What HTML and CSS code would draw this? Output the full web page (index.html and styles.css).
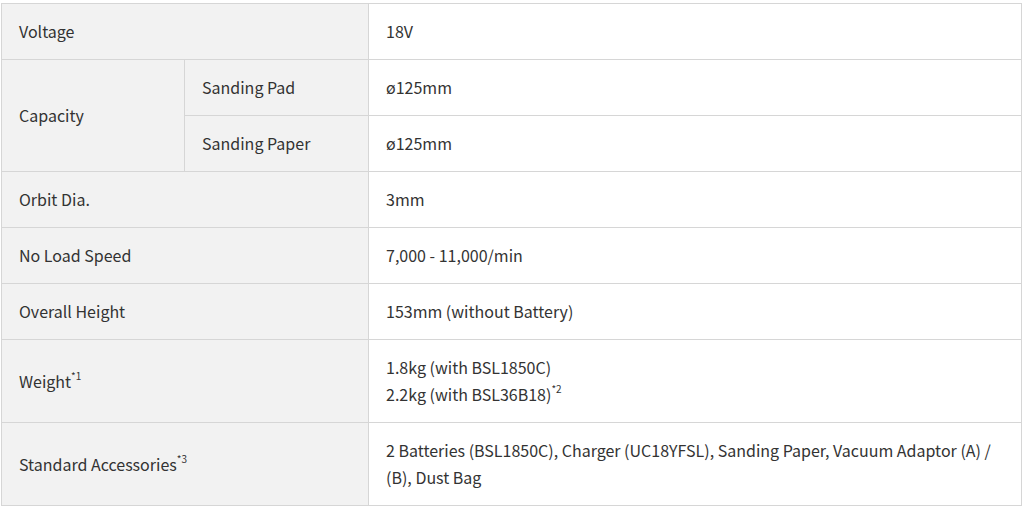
FILE: index.html
```html
<!DOCTYPE html>
<html lang="en">
<head>
<meta charset="utf-8">
<title>Specifications</title>
<link rel="stylesheet" href="styles.css">
</head>
<body>
<table class="spec">
  <colgroup>
    <col class="c1">
    <col class="c2">
    <col class="c3">
  </colgroup>
  <tbody>
    <tr>
      <th colspan="2">Voltage</th>
      <td>18V</td>
    </tr>
    <tr>
      <th rowspan="2">Capacity</th>
      <th>Sanding Pad</th>
      <td>ø125mm</td>
    </tr>
    <tr>
      <th>Sanding Paper</th>
      <td>ø125mm</td>
    </tr>
    <tr>
      <th colspan="2">Orbit Dia.</th>
      <td>3mm</td>
    </tr>
    <tr>
      <th colspan="2">No Load Speed</th>
      <td>7,000 - 11,000/min</td>
    </tr>
    <tr>
      <th colspan="2">Overall Height</th>
      <td>153mm (without Battery)</td>
    </tr>
    <tr>
      <th colspan="2">Weight<sup>*1</sup></th>
      <td>1.8kg (with BSL1850C)<br>2.2kg (with BSL36B18)<sup>*2</sup></td>
    </tr>
    <tr>
      <th colspan="2">Standard Accessories<sup>*3</sup></th>
      <td>2 Batteries (BSL1850C), Charger (UC18YFSL), Sanding Paper, Vacuum Adaptor (A) / (B), Dust Bag</td>
    </tr>
  </tbody>
</table>
</body>
</html>
```

FILE: styles.css
```css
html, body {
  margin: 0;
  background: #ffffff;
}
body {
  padding: 3px 2px 0 1px;
  font-family: "Noto Sans CJK JP", "Source Sans Pro", "Noto Sans", sans-serif;
  font-size: 16px;
  color: #333333;
}
.spec {
  width: 1021px;
  border-collapse: collapse;
  table-layout: fixed;
  border: 1px solid #d4d4d4;
}
.c1 { width: 183px; }
.c2 { width: 184px; }
.spec th,
.spec td {
  border: 1px solid #d6d6d6;
  text-align: left;
  vertical-align: middle;
  font-weight: 400;
  line-height: 27px;
  padding: 14px 16px 14px 17px;
}
.spec th {
  background: #f2f2f2;
}
.spec th:first-child {
  padding-left: 17px;
}
.spec td {
  background: #ffffff;
}
.spec sup {
  font-size: 10px;
  line-height: 0;
  vertical-align: 8px;
}
```
